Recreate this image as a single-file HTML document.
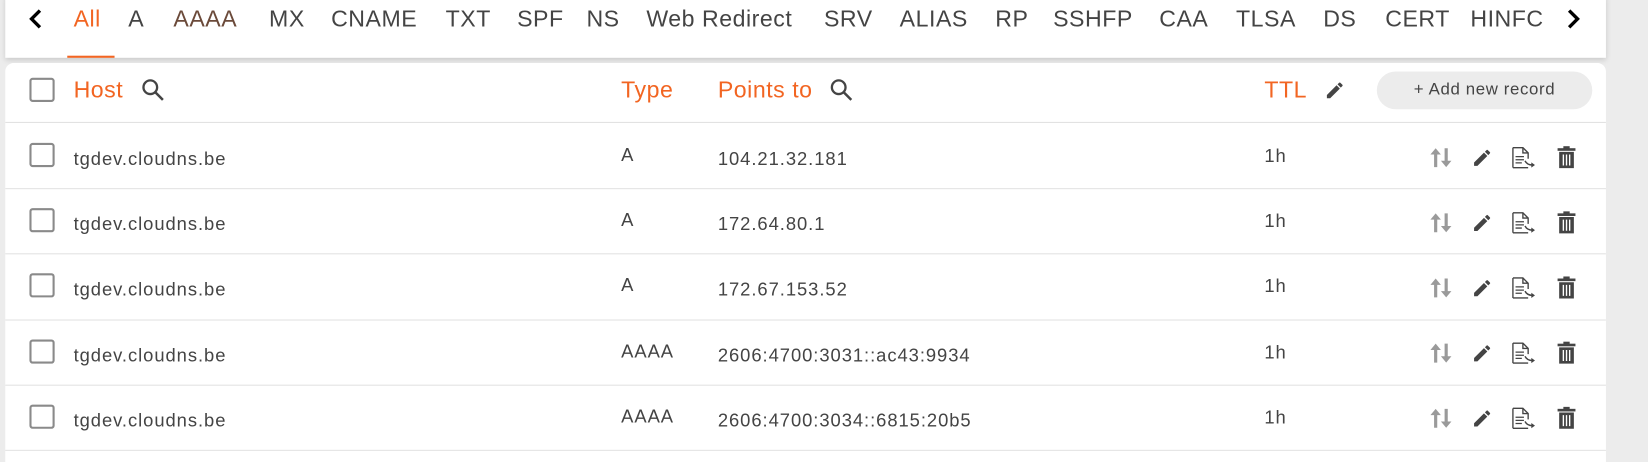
<!DOCTYPE html>
<html><head><meta charset="utf-8"><style>
*{margin:0;padding:0;box-sizing:border-box}
html,body{width:1648px;height:455px;overflow:hidden;background:#ececec;font-family:"Liberation Sans",sans-serif}
#w{position:absolute;left:0;top:0;width:1568px;height:433px;transform:scale(1.051);transform-origin:0 0}
.card1{position:absolute;left:5px;top:-5px;width:1523px;height:60px;background:#fff;box-shadow:0 2px 5px rgba(0,0,0,.15)}
.card2{position:absolute;left:5px;top:60px;width:1523px;height:380px;background:#fff;border-radius:8px 8px 0 0}
.t{position:absolute;font-size:22px;color:#444;top:5px;white-space:nowrap;letter-spacing:.5px}
.h{position:absolute;font-size:22px;color:#f26522;top:73px;letter-spacing:.5px}
.ab{position:absolute;font-size:17.5px;color:#444;white-space:nowrap;letter-spacing:.9px}
.cb{position:absolute;left:28px;width:24px;height:23px;border:2px solid #8a8a8a;border-radius:3px;background:#fff}
.sep{position:absolute;left:5px;width:1523px;height:1px;background:#e2e2e2}
svg{position:absolute}
</style></head><body><div id="w">
<div class="card1"></div>
<div class="card2"></div>
<svg style="left:27px;top:8px" width="14" height="20" viewBox="0 0 14 20"><path d="M11 2 L3 10 L11 18" fill="none" stroke="#000" stroke-width="3.2"/></svg>
<svg style="left:1490px;top:8px" width="14" height="20" viewBox="0 0 14 20"><path d="M3 2 L11 10 L3 18" fill="none" stroke="#000" stroke-width="3.2"/></svg>
<div class="t" style="left:70px;color:#f26522">All</div>
<div style="position:absolute;left:64px;top:53px;width:45px;height:2px;background:#f26522"></div>
<div class="t" style="left:122px">A</div>
<div class="t" style="left:165px;color:#6b4a3a">AAAA</div>
<div class="t" style="left:256px">MX</div>
<div class="t" style="left:315px">CNAME</div>
<div class="t" style="left:424px">TXT</div>
<div class="t" style="left:492px">SPF</div>
<div class="t" style="left:558px">NS</div>
<div class="t" style="left:615px">Web Redirect</div>
<div class="t" style="left:784px">SRV</div>
<div class="t" style="left:856px">ALIAS</div>
<div class="t" style="left:947px">RP</div>
<div class="t" style="left:1002px">SSHFP</div>
<div class="t" style="left:1103px">CAA</div>
<div class="t" style="left:1176px">TLSA</div>
<div class="t" style="left:1259px">DS</div>
<div class="t" style="left:1318px">CERT</div>
<div class="t" style="left:1399px">HINFC</div>

<div class="cb" style="top:74px"></div>
<div class="h" style="left:70px">Host</div>
<svg style="left:134px;top:74px" width="24" height="24" viewBox="0 0 24 24"><circle cx="9" cy="9" r="6.5" fill="none" stroke="#444" stroke-width="2.2"/><path d="M14 14 L21 21" stroke="#444" stroke-width="2.4"/></svg>
<div class="h" style="left:591px">Type</div>
<div class="h" style="left:683px">Points to</div>
<svg style="left:789px;top:74px" width="24" height="24" viewBox="0 0 24 24"><circle cx="9" cy="9" r="6.5" fill="none" stroke="#444" stroke-width="2.2"/><path d="M14 14 L21 21" stroke="#444" stroke-width="2.4"/></svg>
<div class="h" style="left:1203px">TTL</div>
<svg style="left:1260px;top:76px" width="20" height="20" viewBox="0 0 24 24"><path d="M3 17.25V21h3.75L17.81 9.94l-3.75-3.75L3 17.25zM20.71 7.04a1 1 0 0 0 0-1.41l-2.34-2.34a1 1 0 0 0-1.41 0l-1.83 1.83 3.75 3.75 1.83-1.83z" fill="#444"/></svg>
<div style="position:absolute;left:1310px;top:68px;width:205px;height:36px;border-radius:18px;background:#ececec;font-size:16px;letter-spacing:.6px;color:#444;text-align:center;line-height:36px">+ Add new record</div>
<div class="sep" style="top:116px"></div>

<div class="cb" style="top:136px"></div><div class="ab" style="left:70px;top:141px">tgdev.cloudns.be</div><div class="ab" style="left:591px;top:137px">A</div><div class="ab" style="left:683px;top:141px">104.21.32.181</div><div class="ab" style="left:1203px;top:138px">1h</div>
<div class="sep" style="top:179px"></div>
<div class="cb" style="top:198px"></div><div class="ab" style="left:70px;top:203px">tgdev.cloudns.be</div><div class="ab" style="left:591px;top:199px">A</div><div class="ab" style="left:683px;top:203px">172.64.80.1</div><div class="ab" style="left:1203px;top:200px">1h</div>
<div class="sep" style="top:241px"></div>
<div class="cb" style="top:260px"></div><div class="ab" style="left:70px;top:265px">tgdev.cloudns.be</div><div class="ab" style="left:591px;top:261px">A</div><div class="ab" style="left:683px;top:265px">172.67.153.52</div><div class="ab" style="left:1203px;top:262px">1h</div>
<div class="sep" style="top:304px"></div>
<div class="cb" style="top:323px"></div><div class="ab" style="left:70px;top:328px">tgdev.cloudns.be</div><div class="ab" style="left:591px;top:324px">AAAA</div><div class="ab" style="left:683px;top:328px">2606:4700:3031::ac43:9934</div><div class="ab" style="left:1203px;top:325px">1h</div>
<div class="sep" style="top:366px"></div>
<div class="cb" style="top:385px"></div><div class="ab" style="left:70px;top:390px">tgdev.cloudns.be</div><div class="ab" style="left:591px;top:386px">AAAA</div><div class="ab" style="left:683px;top:390px">2606:4700:3034::6815:20b5</div><div class="ab" style="left:1203px;top:387px">1h</div>
<div class="sep" style="top:428px"></div>

<svg width="0" height="0"><defs>
<g id="ic">
<path d="M6 2 L1 8 H4.5 V20 H7.5 V8 H11 Z" fill="#9a9a9a"/><path d="M16 20 L21 14 H17.5 V2 H14.5 V14 H11 Z" fill="#9a9a9a"/>
<g transform="translate(40,1)"><path d="M3 17.25V21h3.75L17.81 9.94l-3.75-3.75L3 17.25zM20.71 7.04a1 1 0 0 0 0-1.41l-2.34-2.34a1 1 0 0 0-1.41 0l-1.83 1.83 3.75 3.75 1.83-1.83z" fill="#444" transform="scale(.85)"/></g>
<g transform="translate(78,0)"><path d="M1.5 1.5 H11 L16 6.5 V12 M16 20.5 H1.5 Z" fill="none" stroke="#444" stroke-width="1.3"/><path d="M1.5 1.5 V20.5" stroke="#444" stroke-width="1.3"/><path d="M11 1.5 V6.5 H16" fill="none" stroke="#444" stroke-width="1.3"/><path d="M4 10H12M4 13H12M4 16H10" stroke="#444" stroke-width="1.2"/><path d="M13 14 Q15 18 20 18" fill="none" stroke="#444" stroke-width="1.4"/><path d="M19 15.5 L22.5 18 L19 20.5Z" fill="#444"/></g>
<g transform="translate(122,0)"><rect x="0" y="2" width="17" height="2.5" fill="#444"/><rect x="5.5" y="0" width="6" height="3" fill="#444"/><path d="M1.5 5.5 H15.5 V21 H1.5Z" fill="#444"/><path d="M5.5 8V18.5M8.5 8V18.5M11.5 8V18.5" stroke="#fff" stroke-width="1.3"/></g>
</g></defs></svg>
<svg style="left:1360px;top:139px" width="150" height="24"><use href="#ic"/></svg>
<svg style="left:1360px;top:201px" width="150" height="24"><use href="#ic"/></svg>
<svg style="left:1360px;top:263px" width="150" height="24"><use href="#ic"/></svg>
<svg style="left:1360px;top:325px" width="150" height="24"><use href="#ic"/></svg>
<svg style="left:1360px;top:387px" width="150" height="24"><use href="#ic"/></svg>
</div></body></html>
